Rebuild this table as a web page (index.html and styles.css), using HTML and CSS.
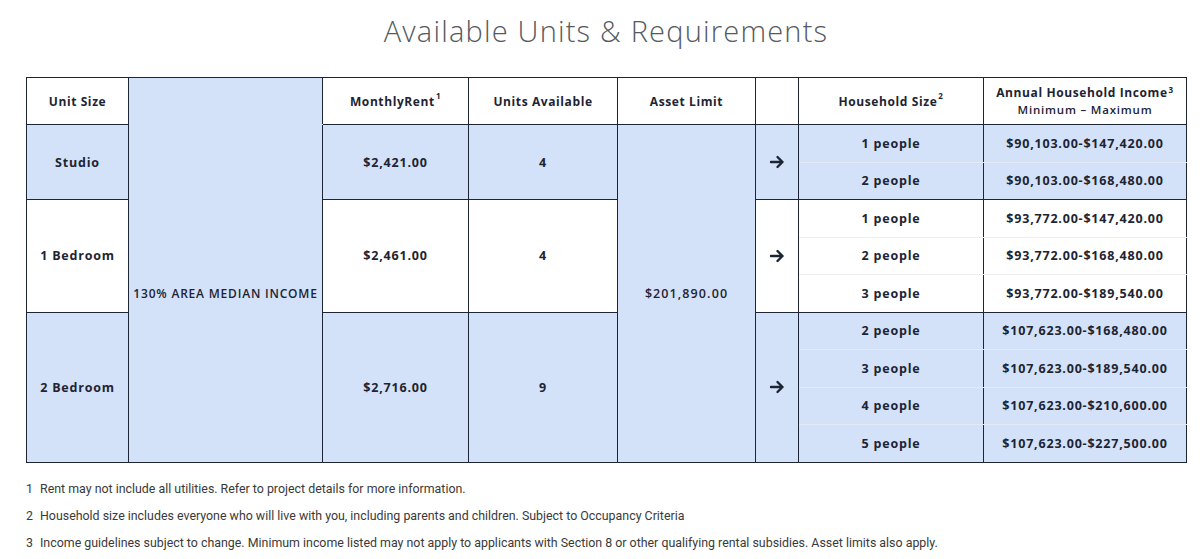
FILE: index.html
```html
<!DOCTYPE html>
<html lang="en">
<head>
<meta charset="utf-8">
<title>Available Units &amp; Requirements</title>
<link rel="stylesheet" href="styles.css">
</head>
<body>
<main class="page">
  <h1 class="title">Available Units &amp; Requirements</h1>
  <table class="units">
    <colgroup>
      <col class="c-size"><col class="c-ami"><col class="c-rent"><col class="c-avail"><col class="c-asset"><col class="c-arrow"><col class="c-hh"><col class="c-inc">
    </colgroup>
    <thead>
      <tr>
        <th>Unit Size</th>
        <th class="ami-head"></th>
        <th>MonthlyRent<sup>1</sup></th>
        <th>Units Available</th>
        <th>Asset Limit</th>
        <th></th>
        <th>Household Size<sup>2</sup></th>
        <th class="inc-head">Annual Household Income<sup>3</sup><span class="sub">Minimum – Maximum</span></th>
      </tr>
    </thead>
    <tbody>
      <tr class="blue grp-start">
        <td rowspan="2">Studio</td>
        <td rowspan="9" class="ami">130% AREA MEDIAN INCOME</td>
        <td rowspan="2">$2,421.00</td>
        <td rowspan="2">4</td>
        <td rowspan="9" class="asset">$201,890.00</td>
        <td rowspan="2" class="arrow"><svg viewBox="0 0 16 16" width="16" height="16"><path d="M2 8h11.5M8.5 3 13.5 8l-5 5" fill="none" stroke="#1d2433" stroke-width="2.4" stroke-linecap="round" stroke-linejoin="round"/></svg></td>
        <td class="sub-cell">1 people</td>
        <td class="sub-cell">$90,103.00-$147,420.00</td>
      </tr>
      <tr class="blue grp-end">
        <td class="sub-cell">2 people</td>
        <td class="sub-cell">$90,103.00-$168,480.00</td>
      </tr>
      <tr class="white grp-start">
        <td rowspan="3">1 Bedroom</td>
        <td rowspan="3">$2,461.00</td>
        <td rowspan="3">4</td>
        <td rowspan="3" class="arrow"><svg viewBox="0 0 16 16" width="16" height="16"><path d="M2 8h11.5M8.5 3 13.5 8l-5 5" fill="none" stroke="#1d2433" stroke-width="2.4" stroke-linecap="round" stroke-linejoin="round"/></svg></td>
        <td class="sub-cell">1 people</td>
        <td class="sub-cell">$93,772.00-$147,420.00</td>
      </tr>
      <tr class="white">
        <td class="sub-cell">2 people</td>
        <td class="sub-cell">$93,772.00-$168,480.00</td>
      </tr>
      <tr class="white grp-end">
        <td class="sub-cell">3 people</td>
        <td class="sub-cell">$93,772.00-$189,540.00</td>
      </tr>
      <tr class="blue grp-start">
        <td rowspan="4">2 Bedroom</td>
        <td rowspan="4">$2,716.00</td>
        <td rowspan="4">9</td>
        <td rowspan="4" class="arrow"><svg viewBox="0 0 16 16" width="16" height="16"><path d="M2 8h11.5M8.5 3 13.5 8l-5 5" fill="none" stroke="#1d2433" stroke-width="2.4" stroke-linecap="round" stroke-linejoin="round"/></svg></td>
        <td class="sub-cell">2 people</td>
        <td class="sub-cell">$107,623.00-$168,480.00</td>
      </tr>
      <tr class="blue">
        <td class="sub-cell">3 people</td>
        <td class="sub-cell">$107,623.00-$189,540.00</td>
      </tr>
      <tr class="blue">
        <td class="sub-cell">4 people</td>
        <td class="sub-cell">$107,623.00-$210,600.00</td>
      </tr>
      <tr class="blue grp-end">
        <td class="sub-cell">5 people</td>
        <td class="sub-cell">$107,623.00-$227,500.00</td>
      </tr>
    </tbody>
  </table>
  <ol class="notes">
    <li><span class="num">1</span>Rent may not include all utilities. Refer to project details for more information.</li>
    <li><span class="num">2</span>Household size includes everyone who will live with you, including parents and children. Subject to Occupancy Criteria</li>
    <li><span class="num">3</span>Income guidelines subject to change. Minimum income listed may not apply to applicants with Section 8 or other qualifying rental subsidies. Asset limits also apply.</li>
  </ol>
</main>
</body>
</html>
```

FILE: styles.css
```css
* { box-sizing: border-box; }
html, body { margin: 0; padding: 0; background: #ffffff; }
body { font-family: "Open Sans", "DejaVu Sans", sans-serif; color: #1d2433; }

.page { padding: 0 14px 0 26px; }

.title {
  margin: 0;
  padding-top: 12px;
  height: 77px;
  text-align: center;
  font-family: "Open Sans", sans-serif;
  font-weight: 300;
  font-size: 29px;
  line-height: 38px;
  color: #555a60;
  letter-spacing: 1.2px;
}

.units {
  width: 1160px;
  border-collapse: collapse;
  table-layout: fixed;
  font-size: 12.5px;
  font-weight: 700;
  letter-spacing: 0.8px;
}
.c-size { width: 102px; }
.c-ami { width: 194px; }
.c-rent { width: 146px; }
.c-avail { width: 149px; }
.c-asset { width: 138px; }
.c-arrow { width: 43px; }
.c-hh { width: 185px; }
.c-inc { width: 203px; }

.units th, .units td {
  border: 1px solid #1d2433;
  text-align: center;
  vertical-align: middle;
  padding: 0;
}
.units th {
  height: 47px;
  background: #ffffff;
  font-weight: 700;
  font-size: 12px;
  letter-spacing: 0.6px;
}
.units sup { font-size: 8px; vertical-align: top; position: relative; top: -3px; margin-left: 1px; }
.units th.ami-head { background: #d3e2f9; border-bottom-color: #d3e2f9; }
.inc-head { line-height: 17px; }
.inc-head .sub { display: block; font-weight: 600; font-size: 11.5px; letter-spacing: 0.8px; }

.units td { height: 37.5px; }
.blue td { background: #d3e2f9; }
.white td { background: #ffffff; }
.units td.ami, .units td.asset { background: #d3e2f9; font-weight: 600; letter-spacing: 1.1px; white-space: nowrap; }
.units td.ami { border-top-color: #d3e2f9; font-size: 12px; letter-spacing: 0.8px; }
.arrow svg { display: block; margin: 0 auto; }

.units td.sub-cell { border-top-color: #e3eaf4; border-bottom-color: #e3eaf4; }
.white td.sub-cell { border-top-color: #eeeeee; border-bottom-color: #eeeeee; }
.units .grp-start td.sub-cell { border-top-color: #1d2433; }
.units .grp-end td.sub-cell { border-bottom-color: #1d2433; }

.notes {
  list-style: none;
  margin: 0;
  padding: 19px 0 0 0;
  font-family: "Roboto", sans-serif;
  font-size: 12.4px;
  color: #3a3a3a;
}
.notes li { height: 27px; line-height: 14px; }
.notes .num { display: inline-block; width: 14px; }
```
